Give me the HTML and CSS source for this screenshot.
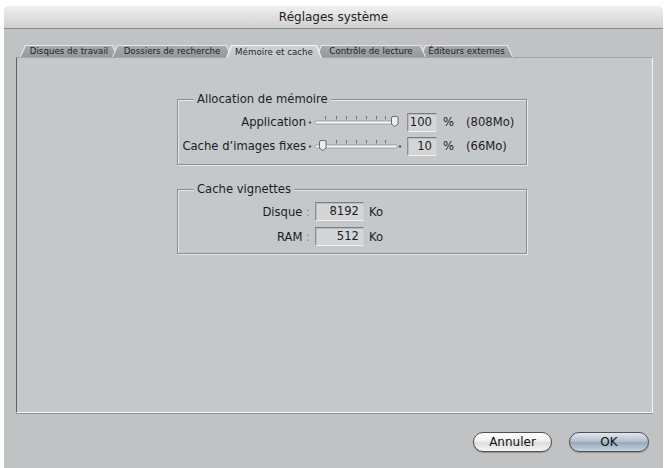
FILE: index.html
```html
<!DOCTYPE html>
<html lang="fr">
<head>
<meta charset="utf-8">
<title>Réglages système</title>
<link rel="stylesheet" href="styles.css">
</head>
<body>
<div class="window">
  <div class="titlebar">Réglages système</div>
  <div class="tabs">
    <div class="tab t1"><span>Disques de travail</span></div>
    <div class="tab t2"><span>Dossiers de recherche</span></div>
    <div class="tab t3 active"><span>Mémoire et cache</span></div>
    <div class="tab t4"><span>Contrôle de lecture</span></div>
    <div class="tab t5"><span>Éditeurs externes</span></div>
  </div>
  <div class="panel">
    <fieldset class="group g1">
      <legend>Allocation de mémoire</legend>
      <div class="grid grid1">
        <span class="label">Application</span>
        <svg class="slider" viewBox="0 0 100 24" width="100" height="24">
          <circle cx="3" cy="12.5" r="1.2" fill="#555"/>
          <rect x="8" y="11" width="82" height="3" rx="1.5" fill="#f7f7f7" stroke="#858789" stroke-width="0.7"/>
          <g stroke="#6f7173" stroke-width="1">
            <line x1="18.5" y1="6" x2="18.5" y2="9.5"/><line x1="29.5" y1="6" x2="29.5" y2="9.5"/>
            <line x1="39.5" y1="6" x2="39.5" y2="9.5"/><line x1="49.5" y1="6" x2="49.5" y2="9.5"/>
            <line x1="59.5" y1="6" x2="59.5" y2="9.5"/><line x1="69.5" y1="6" x2="69.5" y2="9.5"/>
            <line x1="78.5" y1="6" x2="78.5" y2="9.5"/>
          </g>
          <path d="M84.5 8 q0 -1.5 1.5 -1.5 h3.5 q1.5 0 1.5 1.5 v6 l-3.25 2.5 l-3.25 -2.5 z" fill="#ededed" stroke="#5c5e60" stroke-width="0.9"/>
        </svg>
        <div class="field">100</div>
        <span class="unit">%</span>
        <span class="extra">(808Mo)</span>

        <span class="label">Cache d’images fixes</span>
        <svg class="slider" viewBox="0 0 100 24" width="100" height="24">
          <circle cx="3" cy="12.5" r="1.2" fill="#555"/>
          <rect x="8" y="11" width="82" height="3" rx="1.5" fill="#f7f7f7" stroke="#858789" stroke-width="0.7"/>
          <g stroke="#6f7173" stroke-width="1">
            <line x1="18.5" y1="6" x2="18.5" y2="9.5"/><line x1="29.5" y1="6" x2="29.5" y2="9.5"/>
            <line x1="39.5" y1="6" x2="39.5" y2="9.5"/><line x1="49.5" y1="6" x2="49.5" y2="9.5"/>
            <line x1="59.5" y1="6" x2="59.5" y2="9.5"/><line x1="69.5" y1="6" x2="69.5" y2="9.5"/>
            <line x1="78.5" y1="6" x2="78.5" y2="9.5"/>
          </g>
          <path d="M12.5 8 q0 -1.5 1.5 -1.5 h3.5 q1.5 0 1.5 1.5 v6 l-3.25 2.5 l-3.25 -2.5 z" fill="#ededed" stroke="#5c5e60" stroke-width="0.9"/>
          <circle cx="93" cy="12.5" r="1.2" fill="#555"/>
        </svg>
        <div class="field">10</div>
        <span class="unit">%</span>
        <span class="extra">(66Mo)</span>
      </div>
    </fieldset>
    <fieldset class="group g2">
      <legend>Cache vignettes</legend>
      <div class="grid grid2">
        <span class="label">Disque <span class="colon">:</span></span>
        <div class="field">8192</div>
        <span class="unit">Ko</span>
        <span class="label">RAM <span class="colon">:</span></span>
        <div class="field">512</div>
        <span class="unit">Ko</span>
      </div>
    </fieldset>
  </div>
  <div class="buttons">
    <button class="btn cancel">Annuler</button>
    <button class="btn ok">OK</button>
  </div>
</div>
</body>
</html>
```

FILE: styles.css
```css
html, body {
  margin: 0;
  background: #ffffff;
}
body {
  font-family: "DejaVu Sans", "Noto Sans", sans-serif;
  color: #1c1c1c;
}
.window {
  margin: 6px 2px 0 4px;
  height: 462px;
  background: #c1c2c4;
  border-radius: 6px 6px 0 0;
  display: flex;
  flex-direction: column;
}
.titlebar {
  height: 22px;
  flex: none;
  border-bottom: 1px solid #8a8a8a;
  background: linear-gradient(#f0f0f0, #dcdcdc 60%, #d0d0d0);
  border-radius: 6px 6px 0 0;
  display: flex;
  align-items: center;
  justify-content: center;
  font-size: 12px;
  color: #1e1e1e;
}
.tabs {
  display: flex;
  align-items: flex-start;
  margin-top: 16px;
  padding-left: 16px;
  height: 12px;
  position: relative;
  z-index: 2;
}
.tab {
  flex: none;
  height: 12px;
  margin-left: -6px;
  position: relative;
  clip-path: polygon(5px 0, calc(100% - 5px) 0, 100% 100%, 0 100%);
  background: #e4e6e8;
  display: flex;
  align-items: center;
  justify-content: center;
  font-size: 8.7px;
  line-height: 12px;
  color: #1e1e1e;
}
.tab::before {
  content: "";
  position: absolute;
  top: 1px;
  left: 1px;
  right: 1px;
  bottom: 0;
  clip-path: polygon(5px 0, calc(100% - 5px) 0, 100% 100%, 0 100%);
  background: linear-gradient(#a7aaae, #95989c);
}
.tab span {
  position: relative;
}
.t1 { margin-left: 0; width: 98px; z-index: 1; }
.t2 { width: 120px; z-index: 2; }
.t3 { width: 96px; z-index: 5; }
.t4 { width: 110px; z-index: 4; }
.t5 { width: 93px; z-index: 3; }
.tab.active {
  height: 13px;
  margin-bottom: -1px;
  background: #f4f5f6;
}
.tab.active::before {
  background: linear-gradient(#ced1d4, #c5c8cb);
}

.panel {
  flex: none;
  margin: 0 10px 0 12px;
  height: 354px;
  background: #c5c8cb;
  border: 1px solid;
  border-color: #a3a5a8 #f4f5f6 #f4f5f6 #5e6063;
  box-shadow: 0 1px 0 #8e9093;
  display: flex;
  flex-direction: column;
  align-items: flex-start;
}
.group {
  box-sizing: border-box;
  width: 350px;
  margin: 34px 0 0 160px;
  padding: 4px 0 6px 0;
  border: 1px solid #8b8d90;
  box-shadow: inset 1px 1px 0 #e6e8ea, 1px 1px 0 #e6e8ea;
  min-inline-size: 0;
}
.group legend {
  margin-left: 16px;
  padding: 0 3px;
  font-size: 11.6px;
  line-height: 14px;
  background: #c5c8cb;
}
.g2 {
  margin-top: 17px;
  padding: 3px 0 4px 0;
}
.grid {
  display: grid;
  align-items: center;
  font-size: 11.6px;
}
.grid1 {
  grid-template-columns: 129px 100px 30px 29px auto;
  grid-auto-rows: 24px;
}
.grid2 {
  grid-template-columns: 137px 49px auto;
  grid-auto-rows: 25px;
}
.label {
  text-align: right;
  padding-right: 1px;
  white-space: nowrap;
}
.grid2 .label {
  padding-right: 5px;
}
.colon {
  color: #8a8c8f;
}
.slider {
  display: block;
}
.field {
  box-sizing: border-box;
  height: 19px;
  background: #d3d5d7;
  border: 1px solid;
  border-color: #7b7d80 #c9cbcd #eef0f1 #8e9093;
  box-shadow: inset 1px 1px 0 #b9bbbd;
  text-align: right;
  padding-right: 4px;
  line-height: 17px;
}
.grid1 .unit {
  padding-left: 6px;
}
.grid2 .unit {
  padding-left: 5px;
}

.buttons {
  display: flex;
  justify-content: flex-end;
  gap: 17px;
  margin: 19px 14px 0 0;
}
.btn {
  box-sizing: border-box;
  height: 20px;
  border-radius: 10px;
  border: 1px solid #4e5054;
  font-family: "DejaVu Sans", sans-serif;
  font-size: 12px;
  color: #111;
  padding: 0;
  line-height: 18px;
  box-shadow: 0 1px 1px rgba(0,0,0,0.25);
}
.cancel {
  width: 79px;
  background: linear-gradient(#ffffff, #f0f0f0 45%, #dcdcdc 55%, #f6f6f6);
}
.ok {
  width: 80px;
  background: linear-gradient(#e2e8ef, #b3c0ce 45%, #97a8bb 55%, #c8d3df);
}
```
